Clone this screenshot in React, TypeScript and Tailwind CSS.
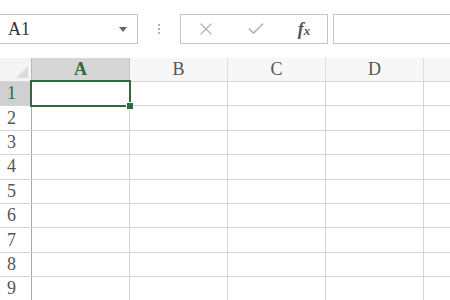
import { X, Check } from 'lucide-react';

const COLS = ['A', 'B', 'C', 'D'];
const ROWS = [1, 2, 3, 4, 5, 6, 7, 8, 9];

const serif = { fontFamily: '"Liberation Serif", "DejaVu Serif", serif' };

function HeaderRow() {
  return (
    <div className="flex h-[24px] border-b border-[#d4d4d4] bg-[#f7f7f7]">
      {/* corner */}
      <div className="relative w-[32px] shrink-0 border-r border-[#b9b9b9] bg-[#f4f4f4]">
        <div className="absolute right-[3px] bottom-[3px] h-0 w-0 [border-bottom:12px_solid_#dcdcdc] [border-left:12px_solid_transparent]" />
      </div>
      {COLS.map((c) => (
        <div
          key={c}
          className={
            c === 'A'
              ? 'flex w-[98px] shrink-0 items-center justify-center border-r border-[#c6c6c6] bg-[#d6d6d6] text-[18px] font-bold text-[#2f6a3f]'
              : 'flex w-[98px] shrink-0 items-center justify-center border-r border-[#dedede] text-[18px] text-[#555]'
          }
          style={serif}
        >
          {c}
        </div>
      ))}
      <div className="flex-1" />
    </div>
  );
}

function Row({ n }: { n: number }) {
  const active = n === 1;
  return (
    <div className="flex h-[24.4px] border-b border-[#d4d4d4]">
      <div
        className={
          active
            ? 'flex w-[32px] shrink-0 items-center pl-[7px] border-r border-[#a8a8a8] bg-[#d0d0d0] text-[18px] text-[#2f6a3f]'
            : 'flex w-[32px] shrink-0 items-center pl-[7px] border-r border-[#a8a8a8] bg-white text-[18px] text-[#555]'
        }
        style={serif}
      >
        {n}
      </div>
      {COLS.map((c) => (
        <div key={c} className="relative w-[98px] shrink-0 border-r border-[#d4d4d4]">
          {active && c === 'A' && (
            <>
              <div className="absolute -left-[2px] -top-[2px] -right-[2px] -bottom-[2px] z-10 border-[2.5px] border-[#2f6a3f]" />
              <div className="absolute -right-[5px] -bottom-[5px] z-20 h-[8px] w-[8px] border border-white bg-[#2f6a3f]" />
            </>
          )}
        </div>
      ))}
      <div className="flex-1" />
    </div>
  );
}

export default function App() {
  return (
    <div className="h-[300px] w-[450px] overflow-hidden bg-white">
      {/* Formula bar */}
      <div className="flex h-[58px] items-start pt-[14px]">
        <div className="-ml-px flex h-[30px] w-[139px] shrink-0 items-center justify-between border border-[#c6c6c6] bg-white pl-[8px] pr-[10px]">
          <span className="text-[18px] text-[#333]" style={serif}>
            A1
          </span>
          <span className="h-0 w-0 border-x-[4px] border-t-[5px] border-x-transparent border-t-[#666]" />
        </div>
        <div className="flex h-[30px] w-[42px] shrink-0 flex-col items-center justify-center gap-[2px]">
          <span className="h-[2px] w-[2px] rounded-full bg-[#9a9a9a]" />
          <span className="h-[2px] w-[2px] rounded-full bg-[#9a9a9a]" />
          <span className="h-[2px] w-[2px] rounded-full bg-[#9a9a9a]" />
        </div>
        <div className="flex h-[30px] w-[148px] shrink-0 items-center border border-[#c6c6c6] bg-white">
          <div className="flex w-[50px] justify-center">
            <X size={20} strokeWidth={1.5} className="text-[#b4b4b4]" />
          </div>
          <div className="flex w-[50px] justify-center">
            <Check size={20} strokeWidth={2} className="text-[#b4b4b4]" />
          </div>
          <div className="flex w-[46px] justify-center">
            <span className="text-[18px] font-bold italic text-[#555]" style={serif}>
              f<span className="text-[13px]">x</span>
            </span>
          </div>
        </div>
        <div className="ml-[5px] h-[30px] flex-1 border border-r-0 border-[#c6c6c6] bg-white" />
      </div>

      {/* Grid */}
      <HeaderRow />
      {ROWS.map((n) => (
        <Row key={n} n={n} />
      ))}
    </div>
  );
}
